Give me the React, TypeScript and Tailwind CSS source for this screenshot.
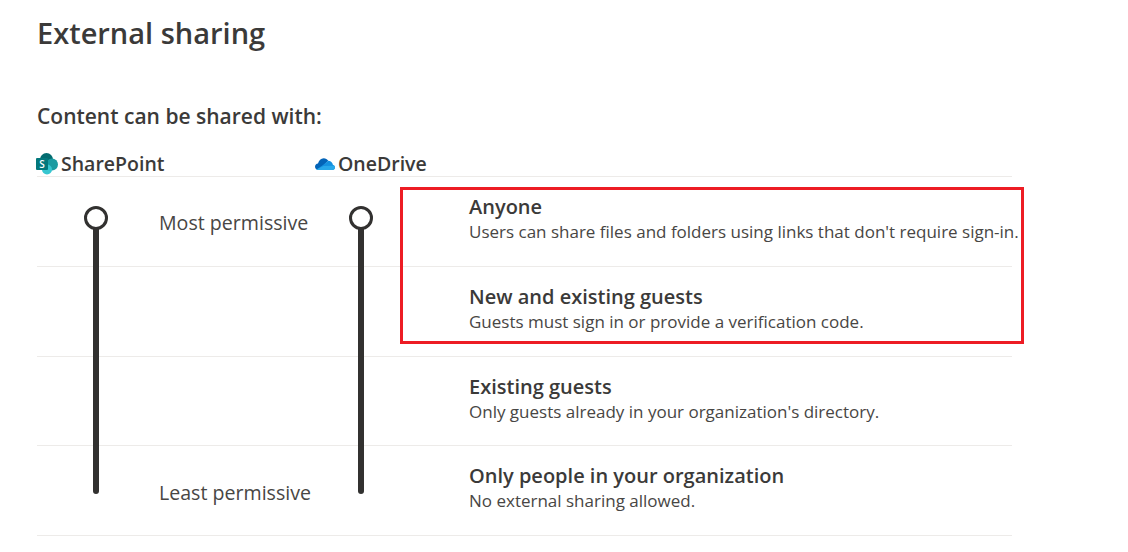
const rows = [
  { title: 'Anyone', text: "Users can share files and folders using links that don't require sign-in." },
  { title: 'New and existing guests', text: 'Guests must sign in or provide a verification code.' },
  { title: 'Existing guests', text: "Only guests already in your organization's directory." },
  { title: 'Only people in your organization', text: 'No external sharing allowed.' },
];

const SharePointIcon = () => (
  <svg width="22" height="22" viewBox="0 0 22 22" className="shrink-0">
    <circle cx="10.500" cy="6.500" r="6.500" fill="#036c70" />
    <circle cx="16" cy="11.500" r="6" fill="#1a9ba1" />
    <circle cx="11" cy="16.500" r="5" fill="#37c6d0" />
    <rect x="0" y="5" width="12" height="12" rx="1" fill="#03787c" />
    <text x="6" y="14.500" textAnchor="middle" fontSize="10" fontWeight="600" fill="#fff" fontFamily="'Open Sans', sans-serif">
      S
    </text>
  </svg>
);

const OneDriveIcon = () => (
  <svg width="20" height="14" viewBox="0 0 20 14" className="shrink-0">
    <path d="M3.500 13C1.500 13 0 11.600 0 9.800c0-1.700 1.300-3 3-3.200C3.700 3.400 6 1.200 8.700 1.200c1.900 0 3.600 1 4.500 2.600L7.500 9.500 3.500 13z" fill="#0364b8" />
    <path d="M13.200 3.800c2.500 0 4.400 1.700 4.700 4C19.200 8.200 20 9.300 20 10.500c0 1.400-1.100 2.500-2.600 2.500H3.500c-.8 0-1.500-.2-2-.6L8 8z" fill="#1490df" />
    <path d="M3.500 13h14c1.400 0 2.500-1.100 2.500-2.500 0-.7-.3-1.300-.7-1.800L8.500 9 1.500 12.400c.5.400 1.200.6 2 .6z" fill="#28a8ea" />
  </svg>
);

const Track = () => (
  <div className="flex flex-col items-center w-[24px]">
    <div className="w-[24px] h-[24px] rounded-full border-[3px] border-[#323130] bg-white" />
    <div className="w-[6px] h-[265px] -mt-[1px] bg-[#323130] rounded-b-full" />
  </div>
);

export default function App() {
  return (
    <div
      className="relative w-[1128px] h-[552px] overflow-hidden bg-white text-[#3b3a39] pl-[37px] pt-[13px]"
      style={{ fontFamily: "'Open Sans', 'Noto Sans', sans-serif" }}
    >
      <h1 className="text-[29px] leading-[40px] font-semibold">External sharing</h1>
      <h2 className="mt-[49px] text-[21px] leading-[28px] font-semibold">Content can be shared with:</h2>

      <div className="w-[975px] mt-[21px] flex items-center h-[26px] text-[19.500px] font-semibold">
        <div className="w-[279px] flex items-center gap-[3px] -ml-[1px]">
          <SharePointIcon />
          <span>SharePoint</span>
        </div>
        <div className="flex items-center gap-[3px]">
          <OneDriveIcon />
          <span>OneDrive</span>
        </div>
      </div>

      <div className="relative w-[975px] -mt-[1px] border-t border-[#edebe9]">
        {rows.map(row => (
          <div key={row.title} className="h-[89.75px] pl-[432px] pt-[17px] border-b border-[#edebe9]">
            <div className="text-[20px] leading-[26px] font-semibold whitespace-nowrap">{row.title}</div>
            <div className="text-[17px] leading-[23px] whitespace-nowrap text-[#484644]">{row.text}</div>
          </div>
        ))}

        <div className="absolute left-[47px] top-[29px]">
          <Track />
        </div>
        <div className="absolute left-[312px] top-[29px]">
          <Track />
        </div>
        <div className="absolute left-[122px] top-[32px] text-[19.600px] leading-[28px] text-[#484644]">Most permissive</div>
        <div className="absolute left-[122px] top-[302px] text-[19.600px] leading-[28px] text-[#484644]">Least permissive</div>
        <div className="absolute left-[363px] top-[10px] w-[624px] h-[157px] border-[3px] border-[#ed1c24]" />
      </div>
    </div>
  );
}
